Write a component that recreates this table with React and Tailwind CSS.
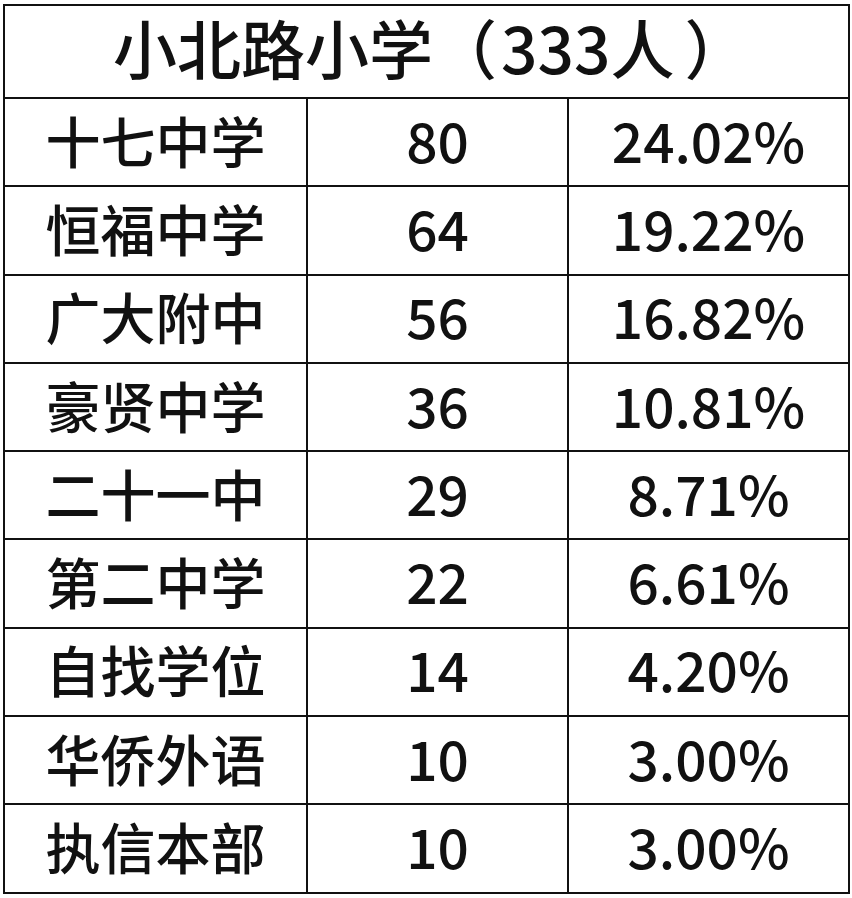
import React from "react";

const rows = [
  ["十七中学", "80", "24.02%"],
  ["恒福中学", "64", "19.22%"],
  ["广大附中", "56", "16.82%"],
  ["豪贤中学", "36", "10.81%"],
  ["二十一中", "29", "8.71%"],
  ["第二中学", "22", "6.61%"],
  ["自找学位", "14", "4.20%"],
  ["华侨外语", "10", "3.00%"],
  ["执信本部", "10", "3.00%"],
];

export default function App() {
  return (
    <div
      className="w-[852px] h-[898px] bg-white pt-[4px] pl-[3px] text-[#111]"
      style={{ fontFamily: '"Noto Sans CJK SC", "Noto Sans", sans-serif' }}
    >
      <table className="w-[845px] border-collapse table-fixed">
        <colgroup>
          <col className="w-[303px]" />
          <col className="w-[261px]" />
          <col className="w-[281px]" />
        </colgroup>
        <thead>
          <tr className="h-[93px]">
            <th
              colSpan={3}
              className="border-2 border-[#111] text-[64px] font-medium leading-none text-left pl-[108px] pb-[12px] whitespace-nowrap"
            >
              小北路小学（<span className="ml-[4px]">333人</span>
              <span className="ml-[10px]">）</span>
            </th>
          </tr>
        </thead>
        <tbody>
          {rows.map((r, i) => (
            <tr key={i} className="h-[88.3px]">
              <td className="border-2 border-[#111] text-center text-[55px] font-medium leading-none pb-[6px]">
                {r[0]}
              </td>
              <td className="border-2 border-[#111] text-center text-[55px] font-medium leading-none pb-[6px]">
                {r[1]}
              </td>
              <td className="border-2 border-[#111] text-center text-[55px] font-medium leading-none pb-[6px]">
                {r[2]}
              </td>
            </tr>
          ))}
        </tbody>
      </table>
    </div>
  );
}
